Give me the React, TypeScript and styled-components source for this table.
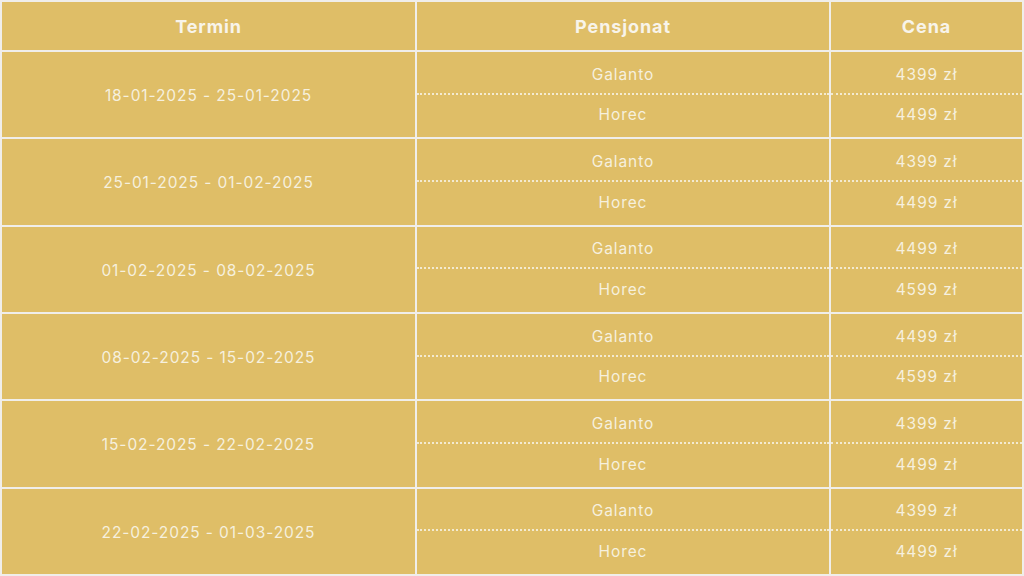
import React from "react";
import styled, { createGlobalStyle } from "styled-components";

const GlobalStyle = createGlobalStyle`
    html, body {
        margin: 0;
        padding: 0;
        background: #f0eeea;
    }
`;

type Offer = { name: string; price: string };
type Term = { range: string; offers: Offer[] };

const terms: Term[] = [
    { range: "18-01-2025 - 25-01-2025", offers: [{ name: "Galanto", price: "4399 zł" }, { name: "Horec", price: "4499 zł" }] },
    { range: "25-01-2025 - 01-02-2025", offers: [{ name: "Galanto", price: "4399 zł" }, { name: "Horec", price: "4499 zł" }] },
    { range: "01-02-2025 - 08-02-2025", offers: [{ name: "Galanto", price: "4499 zł" }, { name: "Horec", price: "4599 zł" }] },
    { range: "08-02-2025 - 15-02-2025", offers: [{ name: "Galanto", price: "4499 zł" }, { name: "Horec", price: "4599 zł" }] },
    { range: "15-02-2025 - 22-02-2025", offers: [{ name: "Galanto", price: "4399 zł" }, { name: "Horec", price: "4499 zł" }] },
    { range: "22-02-2025 - 01-03-2025", offers: [{ name: "Galanto", price: "4399 zł" }, { name: "Horec", price: "4499 zł" }] },
];

function App() {
    return (
        <>
            <GlobalStyle />
            <Table>
                <HeadCell>Termin</HeadCell>
                <HeadCell>Pensjonat</HeadCell>
                <HeadCell>Cena</HeadCell>
                {terms.map((t) => (
                    <Group key={t.range}>
                        <TermCell>{t.range}</TermCell>
                        {t.offers.map((o, i) => (
                            <React.Fragment key={o.name}>
                                <SubCell $first={i === 0}>{o.name}</SubCell>
                                <SubCell $first={i === 0}>{o.price}</SubCell>
                            </React.Fragment>
                        ))}
                    </Group>
                ))}
            </Table>
        </>
    );
}

export default App;

const Table = styled.div`
    width: 1024px;
    height: 576px;
    box-sizing: border-box;
    padding: 2px;
    display: grid;
    grid-template-columns: 413px 412px 191px;
    grid-template-rows: 48px repeat(6, 1fr);
    gap: 2px;
    background: #f0eeea;
    font-family: Inter, "Liberation Sans", sans-serif;
`;

const HeadCell = styled.div`
    background: #dfbe67;
    color: #f8f4ea;
    font-weight: 700;
    font-size: 18px;
    letter-spacing: 0.9px;
    display: flex;
    align-items: center;
    justify-content: center;
`;

const Group = styled.div`
    grid-column: 1 / -1;
    display: grid;
    grid-template-columns: 413px 412px 191px;
    grid-template-rows: 1fr 1fr;
    column-gap: 2px;
`;

const TermCell = styled.div`
    grid-row: span 2;
    background: #dfbe67;
    color: #f6f0de;
    font-size: 15.5px;
    letter-spacing: 0.9px;
    display: flex;
    align-items: center;
    justify-content: center;
    padding-top: 2px;
`;

const SubCell = styled.div<{ $first: boolean }>`
    background: #dfbe67;
    color: #f6f0de;
    font-size: 15.5px;
    letter-spacing: 0.9px;
    display: flex;
    align-items: center;
    justify-content: center;
    padding: ${(p) => (p.$first ? "4px 0 0" : "0 0 2px")};
    border-bottom: ${(p) => (p.$first ? "2px dotted #f3ead0" : "none")};
`;
